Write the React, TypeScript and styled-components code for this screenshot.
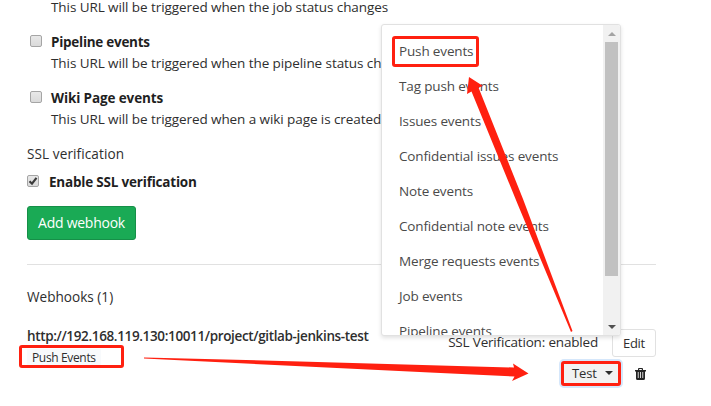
import React from 'react';
import styled, { createGlobalStyle } from 'styled-components';

const RED = '#ff2010';

const GlobalStyle = createGlobalStyle`
  * { box-sizing: border-box; }
  body { margin: 0; background: #fff; overflow: hidden; }
`;

const Page = styled.main`
  position: relative;
  width: 711px;
  height: 406px;
  overflow: hidden;
  padding-left: 27px;
  background: #fff;
  color: #2e2e2e;
  font: 13.5px/20px 'Open Sans', 'Noto Sans', sans-serif;
  white-space: nowrap;
`;

const Content = styled.div`
  display: flex;
  flex-direction: column;
  width: 629px;
`;

const EventOption = styled.div`
  display: flex;
  gap: 9px;
  height: 56px;
  padding-left: 3px;
`;

const Options = styled.div`
  height: 144px;
  margin-top: -24px;
`;

const Check = styled.span`
  display: flex;
  flex: none;
  width: 12px;
  height: 12px;
  margin-top: 3px;
  border: 1px solid #a5a5a5;
  border-radius: 2px;
  background: linear-gradient(#e8e8e8, #dadada);
`;

const Text = styled.span<{ $track?: number }>`
  display: block;
  letter-spacing: ${(p) => p.$track ?? 0}px;
`;

const Strong = styled(Text)`
  color: #1f1f1f;
  font-weight: 700;
`;

const Description = styled(Text)`
  margin-top: 1px;
`;

const Heading = styled(Text)<{ $top: number }>`
  height: 20px;
  margin-top: ${(p) => p.$top}px;
  font-weight: 500;
  font-size: 13.6px;
`;

const SslOption = styled.div`
  display: flex;
  gap: 10px;
  margin-top: 8px;
`;

const AddButton = styled.button`
  width: 109px;
  height: 34px;
  margin-top: 14px;
  padding: 0;
  border: 1px solid #168f48;
  border-radius: 3px;
  background: #1aaa55;
  color: #fff;
  font: inherit;
  font-size: 14px;
  letter-spacing: -0.25px;
`;

const Divider = styled.hr`
  width: 100%;
  height: 1px;
  margin: 24px 0 0;
  border: 0;
  background: #e1e1e1;
`;

const Hook = styled.div`
  display: flex;
  justify-content: space-between;
  margin-top: 19px;
`;

const HookInfo = styled.div`
  display: flex;
  flex-direction: column;
  align-items: flex-start;
`;

const HookUrl = styled(Text)`
  font-weight: 600;
`;

const Tag = styled.span`
  height: 18px;
  margin-top: 3px;
  padding: 0 5px;
  background: #f8fafc;
  font-size: 12px;
  line-height: 18px;
  letter-spacing: -0.35px;
`;

const HookActions = styled.div`
  display: flex;
  flex-direction: column;
  align-items: flex-end;
`;

const ActionRow = styled.div`
  display: flex;
  align-items: center;
  height: 28px;
  margin-top: 3px;
`;

const ActionLabel = styled(Text)`
  margin-top: -3px;
`;

const EditButton = styled.button`
  width: 44px;
  height: 28px;
  margin-left: 14px;
  padding: 0;
  border: 1px solid #e1e1e1;
  border-radius: 3px;
  background: #fff;
  color: #2e2e2e;
  font: inherit;
  font-size: 13px;
  letter-spacing: -0.3px;
`;

const TestButton = styled.button`
  display: flex;
  align-items: center;
  gap: 8px;
  width: 60px;
  height: 25px;
  padding: 0 0 2px 8px;
  border: 3px solid ${RED};
  border-radius: 3px;
  box-shadow: 0 0 0 2px #d5e7fb;
  background: #f2f2f2;
  color: #2e2e2e;
  font: inherit;
  font-size: 13px;
  letter-spacing: -0.1px;
`;

const TestRow = styled.div`
  display: flex;
  align-items: center;
  gap: 14px;
  margin-top: 4px;
  padding-right: 10px;
`;

const Menu = styled.div`
  position: absolute;
  left: 381px;
  top: 24px;
  display: flex;
  width: 240px;
  height: 312px;
  border: 1px solid #e1e1e1;
  border-radius: 3px;
  background: #fff;
  box-shadow: 0 2px 4px rgba(0, 0, 0, 0.12);
  overflow: hidden;
  color: #4a4a4a;
`;

const MenuList = styled.div`
  flex: 1;
  padding: 9px 0 0 17px;
`;

const MenuItem = styled(Text)`
  height: 35px;
  line-height: 35px;
`;

const Scrollbar = styled.div`
  display: flex;
  flex-direction: column;
  align-items: center;
  width: 17px;
  background: #f1f1f1;
`;

const ScrollThumb = styled.div`
  width: 13px;
  height: 234px;
  background: #c1c1c1;
`;

const ScrollButton = styled.div`
  display: flex;
  align-items: center;
  justify-content: center;
  height: 17px;
`;

const LowerTrack = styled.div`
  flex: 1;
`;

const Highlight = styled.div<{ $x: number; $y: number; $w: number; $h: number }>`
  position: absolute;
  left: ${(p) => p.$x}px;
  top: ${(p) => p.$y}px;
  width: ${(p) => p.$w}px;
  height: ${(p) => p.$h}px;
  border: 3px solid ${RED};
  border-radius: 3px;
`;

const Arrows = styled.svg`
  position: absolute;
  inset: 0;
  pointer-events: none;
`;

const menuItems = [
  'Push events',
  'Tag push events',
  'Issues events',
  'Confidential issues events',
  'Note events',
  'Confidential note events',
  'Merge requests events',
  'Job events',
  'Pipeline events',
];

const options = [
  { title: 'Job events', track: -0.2, text: 'This URL will be triggered when the job status changes' },
  { title: 'Pipeline events', track: -0.27, text: 'This URL will be triggered when the pipeline status changes' },
  { title: 'Wiki Page events', track: -0.12, text: 'This URL will be triggered when a wiki page is created/updated' },
];

const Caret = ({ up = false, color = '#505050' }: { up?: boolean; color?: string }) => (
  <svg width="8" height="4" viewBox="0 0 8 4">
    <path d={up ? 'M0 4 4 0 8 4Z' : 'M0 0H8L4 4Z'} fill={color} />
  </svg>
);

const Trash = () => (
  <svg width="11" height="12" viewBox="0 0 11 12">
    <path
      d="M3 2V1Q3 0 4 0H7Q8 0 8 1V2H11V3.5H10V10.5Q10 12 8.5 12H2.5Q1 12 1 10.5V3.5H0V2ZM4.2 2H6.8V1.1H4.2ZM2.8 4V10H3.6V4ZM5.1 4V10H5.9V4ZM7.4 4V10H8.2V4Z"
      fill="#242424"
      fillRule="evenodd"
    />
  </svg>
);

export default function App() {
  return (
    <>
      <GlobalStyle />
      <Page>
        <Content>
          <Options>
            {options.map((option) => (
              <EventOption key={option.title}>
                <Check />
                <div>
                  <Strong $track={option.track}>{option.title}</Strong>
                  <Description $track={-0.08}>{option.text}</Description>
                </div>
              </EventOption>
            ))}
          </Options>
          <Heading $top={24} $track={0.08}>SSL verification</Heading>
          <SslOption>
            <Check>
              <svg width="10" height="10" viewBox="0 0 10 10">
                <path d="M1.5 5.2 4 7.7 8.5 1.8" fill="none" stroke="#3b3b3b" strokeWidth="2.2" />
              </svg>
            </Check>
            <Strong $track={-0.2}>Enable SSL verification</Strong>
          </SslOption>
          <AddButton>Add webhook</AddButton>
          <Divider />
          <Heading $top={22}>Webhooks (1)</Heading>
          <Hook>
            <HookInfo>
              <HookUrl $track={-0.36}>http://192.168.119.130:10011/project/gitlab-jenkins-test</HookUrl>
              <Tag>Push Events</Tag>
            </HookInfo>
            <HookActions>
              <ActionRow>
                <ActionLabel $track={-0.18}>SSL Verification: enabled</ActionLabel>
                <EditButton>Edit</EditButton>
              </ActionRow>
              <TestRow>
                <TestButton>
                  Test <Caret color="#2e2e2e" />
                </TestButton>
                <Trash />
              </TestRow>
            </HookActions>
          </Hook>
        </Content>
        <Menu>
          <MenuList>
            {menuItems.map((label) => (
              <MenuItem key={label} $track={-0.15}>
                {label}
              </MenuItem>
            ))}
          </MenuList>
          <Scrollbar>
            <ScrollButton>
              <Caret up color="#a3a3a3" />
            </ScrollButton>
            <ScrollThumb />
            <LowerTrack />
            <ScrollButton>
              <Caret />
            </ScrollButton>
          </Scrollbar>
        </Menu>
        <Highlight $x={392} $y={36} $w={87} $h={31} />
        <Highlight $x={19} $y={345} $w={105} $h={23} />
        <Arrows width="711" height="406" fill={RED}>
          <path d="M144 357.5 L300 361.5 L514 367.5 L513 363.5 L528.5 373.5 L512 381 L514.5 376.5 L430 372.5 L144 358.5Z" />
          <path d="M469 77 L483 86 L478.5 87.5 L523 199 L572.5 331 L571 332 L518 205 L471.5 91.5 L467 94Z" />
        </Arrows>
      </Page>
    </>
  );
}
